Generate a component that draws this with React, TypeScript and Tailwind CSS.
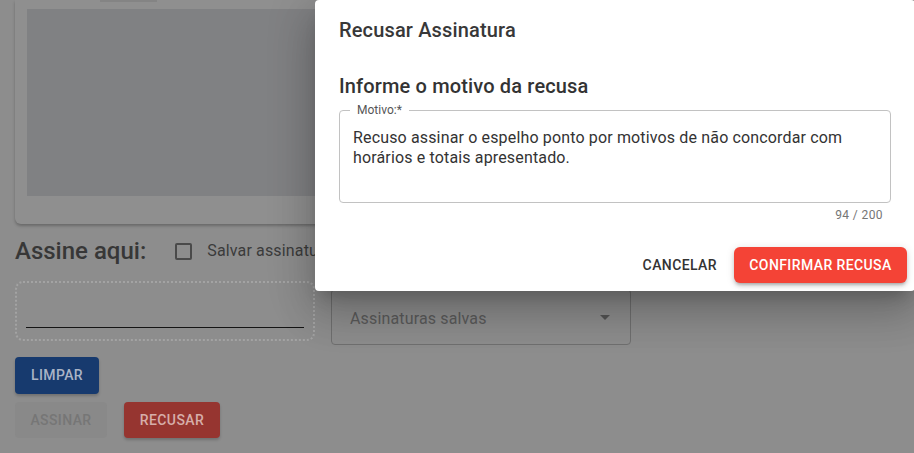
import React from 'react';

const SignaturePage = () => {
  return (
    <div className="relative w-[914px] h-[453px] overflow-hidden bg-[#8d8d8d] font-['Roboto',sans-serif]">
      {/* cartão do espelho de ponto (rolado para cima) */}
      <div className="ml-[15px] w-[620px] rounded-b-[6px] bg-[#8f8f8f] px-[12px] pt-[9px] pb-[28px] shadow-[0_2px_3px_rgba(0,0,0,0.25)] relative">
        <div className="absolute left-[85px] top-0 h-[2px] w-[57px] bg-[#848484]" />
        <div className="h-[187px] bg-[#808183]" />
      </div>

      <div className="px-[15px] pt-[15px]">
        <div className="flex items-center h-[24px]">
          <h2 className="text-[24px] font-medium leading-[24px] text-[#373737]">Assine aqui:</h2>
          <span className="ml-[29px] h-[17px] w-[17px] rounded-[2px] border-2 border-[#4a4a4a]" />
          <span className="ml-[15px] text-[16px] tracking-[0.15px] text-[#3b3b3b]">Salvar assinatura</span>
        </div>

        <div className="mt-[18px] flex items-start gap-[16px]">
          <div className="flex h-[60px] w-[300px] items-end rounded-[8px] border-2 border-dotted border-[#a3a3a3] px-[9px] pb-[11px]">
            <div className="h-px w-full bg-[#151515]" />
          </div>
          <div className="mt-[8px] flex h-[56px] w-[300px] items-center justify-between rounded-[4px] border border-[#6f6f6f] pl-[18px] pr-[20px]">
            <span className="pt-[4px] text-[16px] tracking-[0.15px] text-[#5a5a5a]">Assinaturas salvas</span>
            <svg width="10" height="5" viewBox="0 0 10 5">
              <path d="M0 0 L5 5 L10 0 Z" fill="#545454" />
            </svg>
          </div>
        </div>

        <button className="mt-[12px] flex h-[37px] w-[84px] items-center justify-center rounded-[4px] bg-[#173a6e] text-[14px] font-medium tracking-[0.4px] text-[#aab4c6] shadow-[0_2px_3px_rgba(0,0,0,0.2)]">
          LIMPAR
        </button>

        <div className="mt-[8px] flex gap-[17px]">
          <button className="flex h-[36px] w-[92px] items-center justify-center rounded-[4px] bg-[#898989] text-[14px] font-medium tracking-[0.4px] text-[#767676]">
            ASSINAR
          </button>
          <button className="flex h-[36px] w-[96px] items-center justify-center rounded-[4px] bg-[#963530] text-[14px] font-medium tracking-[0.4px] text-[#d6aeaa] shadow-[0_2px_3px_rgba(0,0,0,0.2)]">
            RECUSAR
          </button>
        </div>
      </div>

      {/* diálogo de recusa */}
      <div className="absolute left-[315px] top-0 h-[291px] w-[600px] rounded-[4px] bg-white px-[24px] pt-[18px] shadow-[0_11px_15px_-7px_rgba(0,0,0,0.2),0_24px_38px_3px_rgba(0,0,0,0.14),0_9px_46px_8px_rgba(0,0,0,0.12)]">
        <h2 className="text-[20px] font-medium tracking-[0.15px] leading-[24px] text-[#383838]">Recusar Assinatura</h2>
        <h3 className="mt-[32px] text-[20px] font-medium tracking-[0.15px] leading-[24px] text-[#333]">Informe o motivo da recusa</h3>

        <div className="relative mt-[12px] h-[93px] rounded-[4px] border border-[#c2c2c2] pl-[13px] pr-[14px] pt-[17px]">
          <span className="absolute left-[10px] top-[-8px] bg-white px-[7px] text-[12px] leading-[14px] text-[#555]">Motivo:*</span>
          <p className="text-[16px] leading-[20px] tracking-[0.15px] text-[#333]">
            Recuso assinar o espelho ponto por motivos de não concordar com horários e totais apresentado.
          </p>
        </div>
        <div className="mt-[4px] pr-[8px] text-right text-[12px] leading-[16px] tracking-[0.4px] text-[#757575]">94 / 200</div>

        <div className="mt-[24px] flex items-center justify-end gap-[9px] -mr-[16px]">
          <button className="px-[8px] h-[36px] text-[14px] font-medium tracking-[0.4px] text-[#333]">CANCELAR</button>
          <button className="flex h-[36px] w-[173px] items-center justify-center rounded-[6px] bg-[#f44336] text-[14px] font-medium tracking-[0.4px] text-white shadow-[0_3px_3px_-2px_rgba(0,0,0,0.2),0_3px_4px_0_rgba(0,0,0,0.14),0_1px_8px_0_rgba(0,0,0,0.12)]">
            CONFIRMAR RECUSA
          </button>
        </div>
      </div>
    </div>
  );
};

export default function App() {
  return <SignaturePage />;
}
